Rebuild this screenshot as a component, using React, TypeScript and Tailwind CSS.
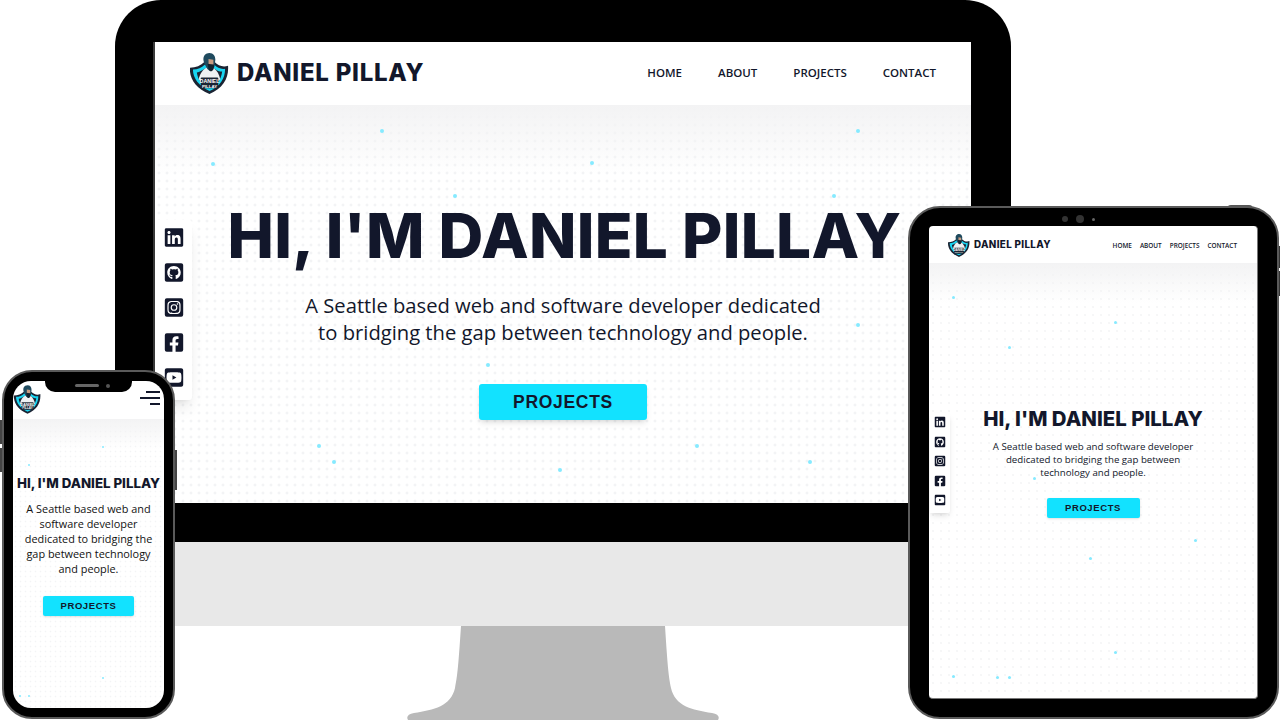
import React from 'react';
import { FaLinkedin, FaGithubSquare, FaInstagramSquare, FaFacebookSquare, FaYoutubeSquare } from 'react-icons/fa';

const socials = [FaLinkedin, FaGithubSquare, FaInstagramSquare, FaFacebookSquare, FaYoutubeSquare];
const navItems = ['HOME', 'ABOUT', 'PROJECTS', 'CONTACT'];

const desktopSpecks = [[226, 25], [702, 25], [57, 58], [436, 57], [299, 90], [678, 90], [702, 219], [332, 259], [163, 340], [541, 340], [178, 356], [654, 356], [404, 364]];
const tabletSpecks = [[24, 34], [186, 59], [80, 84], [266, 277], [161, 295], [186, 389], [105, 215], [24, 413], [68, 414], [80, 414]];
const phoneSpecks = [[90, 28], [16, 46], [90, 259], [7, 277], [16, 277]];

const Specks = ({ points, size }: { points: number[][]; size: number }) => (
  <>
    {points.map(([x, y], i) => (
      <span
        key={i}
        className="absolute rounded-full bg-[#86eaff]"
        style={{ left: x - 1, top: y - 1, width: size, height: size }}
      />
    ))}
  </>
);

const Logo = ({ className }: { className: string }) => (
  <svg viewBox="0 0 40 42" className={className}>
    <path d="M0 15 C6 15 11 13 15 9 L25 9 C29 13 34 15 39 13 C40 26 34 36 20 42 C6 36 -1 26 0 15Z" fill="#1b2433" />
    <path d="M3 17 C8 17 12 15 15 12 L25 12 C28 15 32 17 36 16 C36 26 31 34 20 39 C9 34 3 26 3 17Z" fill="#18d5f2" />
    <path d="M7 20 C10 19 12 18 15 16 L25 16 C28 18 30 19 33 19 C32 27 28 33 20 36 C12 33 8 27 7 20Z" fill="#1b2433" />
    <path d="M9 27 C10 21 13 17 17 15 L24 15 C28 18 30 22 31 27 L25 33 L15 33Z" fill="#eef1f3" />
    <path d="M14 4 C15 1 18 0 20 0 C24 0 26 3 26 7 L25 14 C23 19 19 19 17 15 C15 11 13 8 14 4Z" fill="#1f4a5e" />
    <path d="M19 6 L24 7 L24 12 L19 12Z" fill="#c99b80" />
    <path d="M18 11 L25 12 L24 17 C22 20 20 19 19 16Z" fill="#14222e" />
    <rect x="11" y="25" width="18" height="11" rx="1" fill="#1b2433" />
    <text x="20" y="30.5" textAnchor="middle" className="font-['Liberation_Sans',sans-serif] font-bold text-[5.5px] fill-white">DANIEL</text>
    <text x="20" y="35.5" textAnchor="middle" className="font-['Liberation_Sans',sans-serif] font-bold text-[4.5px] fill-white">PILLAY</text>
  </svg>
);

const Desktop = () => (
  <div className="absolute left-[115px] top-0 w-[896px] h-[626px] flex flex-col">
    <div className="bg-black rounded-t-[46px] h-[542px] pt-[42px] pl-[38px] pr-[40px] pb-[39px]">
      <div className="h-full border-l-2 border-[#3a3a3a] bg-white flex flex-col">
        <header className="h-[63px] flex items-center pl-[35px] pr-[35px] shrink-0">
          <Logo className="w-[39px] h-[41px]" />
          <span className="ml-[8px] mb-[1px] font-['Inter',sans-serif] font-extrabold text-[24px] tracking-[0.75px] text-[#12172b]">DANIEL PILLAY</span>
          <nav className="ml-auto mb-[2px] flex gap-[36px] font-['Open_Sans',sans-serif] font-semibold text-[11.5px] text-[#12172b]">
            {navItems.map((n) => <span key={n}>{n}</span>)}
          </nav>
        </header>
        <main className="relative flex-1 flex flex-col items-center pt-[96px] bg-[radial-gradient(circle,#f1f2f4_0.5px,transparent_2px)] bg-[length:8px_8px]">
          <div className="absolute inset-x-0 top-0 h-[70px] bg-gradient-to-b from-[#f3f3f4] to-transparent" />
          <Specks points={desktopSpecks} size={3.5} />
          <h1 className="relative font-['Inter',sans-serif] font-extrabold text-[62px] leading-[70px] tracking-[0.3px] text-[#12172b] whitespace-nowrap ml-[3px]">HI, I'M DANIEL PILLAY</h1>
          <p className="relative mt-[21px] font-['Open_Sans',sans-serif] text-[20.2px] leading-[27px] text-center text-[#12172b]">
            A Seattle based web and software developer dedicated<br />to bridging the gap between technology and people.
          </p>
          <button className="relative mt-[38px] w-[168px] h-[36px] rounded-[3px] bg-[#12e2ff] shadow-md font-['Liberation_Sans',sans-serif] font-bold text-[17.5px] tracking-[0.7px] text-[#12172b]">PROJECTS</button>
          <aside className="absolute left-0 top-[115px] w-[37px] h-[180px] bg-white rounded-r-[3px] shadow-lg flex flex-col items-center pt-[7px] gap-[14px]">
            {socials.map((Icon, i) => <Icon key={i} className="w-[22px] h-[21px] text-[#12172b] shrink-0" />)}
          </aside>
        </main>
      </div>
    </div>
    <div className="flex-1 bg-[#e8e8e8]" />
  </div>
);

const Stand = () => (
  <svg viewBox="0 0 312 94" className="absolute left-[407px] top-[626px] w-[312px] h-[94px]">
    <path d="M54 0 L258 0 C260 30 261 48 264 62 C268 80 285 84 305 87 C311 88 313 91 311 94 L1 94 C-1 91 1 88 7 87 C27 84 44 80 48 62 C51 48 52 30 54 0Z" fill="#b9b9b9" />
  </svg>
);

const Tablet = () => (
  <div className="absolute left-[908px] top-[206px]">
    <div className="absolute left-[319px] top-[-1px] w-[26px] h-[4px] rounded-t-sm bg-[#555]" />
    <div className="absolute left-[369px] top-[40px] w-[3px] h-[22px] bg-[#333]" />
    <div className="absolute left-[369px] top-[65px] w-[3px] h-[25px] bg-[#333]" />
    <div className="relative w-[371px] h-[513px] rounded-[32px] bg-black border-2 border-[#5a5a5a] pt-[18px] px-[19px] pb-[18px]">
      <div className="absolute left-[152px] top-[7px] flex items-center gap-[8px]">
        <span className="w-[6px] h-[6px] rounded-full bg-[#333]" />
        <span className="w-[8px] h-[8px] rounded-full bg-[#333]" />
        <span className="w-[3px] h-[3px] rounded-full bg-[#666]" />
      </div>
      <div className="h-full rounded-[4px] border-b border-r border-[#777] bg-white overflow-hidden flex flex-col">
        <header className="h-[37px] flex items-center pt-[2px] pl-[19px] pr-[20px] shrink-0">
          <Logo className="w-[22px] h-[23px]" />
          <span className="ml-[4px] font-['Inter',sans-serif] font-extrabold text-[9.8px] tracking-[0.35px] text-[#12172b]">DANIEL PILLAY</span>
          <nav className="ml-auto flex gap-[8px] font-['Open_Sans',sans-serif] font-semibold text-[6.4px] text-[#12172b]">
            {navItems.map((n) => <span key={n}>{n}</span>)}
          </nav>
        </header>
        <main className="relative flex-1 flex flex-col items-center pt-[144px] bg-[radial-gradient(circle,#f3f4f5_0.4px,transparent_1.5px)] bg-[length:8px_8px]">
          <div className="absolute inset-x-0 top-0 h-[40px] bg-gradient-to-b from-[#f3f3f4] to-transparent" />
          <Specks points={tabletSpecks} size={2.5} />
          <h2 className="relative font-['Inter',sans-serif] font-extrabold text-[20.4px] leading-[24px] text-[#12172b] whitespace-nowrap">HI, I'M DANIEL PILLAY</h2>
          <p className="relative mt-[9px] font-['Open_Sans',sans-serif] text-[9.7px] leading-[13px] text-center text-[#12172b]">
            A Seattle based web and software developer<br />dedicated to bridging the gap between<br />technology and people.
          </p>
          <button className="relative mt-[19px] w-[93px] h-[20px] rounded-[2px] bg-[#12e2ff] shadow font-['Liberation_Sans',sans-serif] font-bold text-[9.5px] tracking-[0.6px] text-[#12172b]">PROJECTS</button>
          <aside className="absolute left-[1px] top-[150px] w-[20px] h-[100px] bg-white rounded-r-[2px] shadow-md flex flex-col items-center pt-[3px] gap-[7.5px]">
            {socials.map((Icon, i) => <Icon key={i} className="w-[12px] h-[12px] text-[#12172b] shrink-0" />)}
          </aside>
        </main>
      </div>
    </div>
  </div>
);

const Phone = () => (
  <div className="absolute left-[2px] top-[370px]">
    <div className="absolute left-[-2px] top-[50px] w-[2px] h-[24px] bg-[#444]" />
    <div className="absolute left-[-2px] top-[78px] w-[2px] h-[24px] bg-[#444]" />
    <div className="absolute left-[173px] top-[80px] w-[2px] h-[40px] bg-[#444]" />
    <div className="relative w-[173px] h-[349px] rounded-[30px] bg-black border-2 border-[#5a5a5a] p-[9px]">
      <div className="h-full rounded-[18px] bg-white overflow-hidden flex flex-col">
        <header className="relative h-[38px] flex items-start justify-between pl-[1px] pr-[4px] shrink-0">
          <Logo className="w-[27px] h-[29px] mt-[4px]" />
          <div className="absolute left-[32px] top-0 w-[87px] h-[11px] pl-[30px] pb-[2px] bg-black rounded-b-[10px] flex items-center gap-[7px]">
            <span className="w-[24px] h-[3px] rounded-full bg-[#666]" />
            <span className="w-[4px] h-[4px] rounded-full bg-[#555]" />
          </div>
          <div className="flex flex-col items-end gap-[4px] mt-[10px]">
            <span className="w-[14px] h-[2px] bg-[#12172b]" />
            <span className="w-[20px] h-[2px] bg-[#12172b]" />
            <span className="w-[10px] h-[2px] bg-[#12172b]" />
          </div>
        </header>
        <main className="relative flex-1 flex flex-col items-center pt-[56px] bg-[radial-gradient(circle,#f3f4f5_0.3px,transparent_1.2px)] bg-[length:5px_5px]">
          <div className="absolute inset-x-0 top-0 h-[30px] bg-gradient-to-b from-[#f3f3f4] to-transparent" />
          <Specks points={phoneSpecks} size={2} />
          <h3 className="relative font-['Inter',sans-serif] font-extrabold text-[13.3px] leading-[16px] text-[#12172b] whitespace-nowrap">HI, I'M DANIEL PILLAY</h3>
          <p className="relative mt-[10px] font-['Open_Sans',sans-serif] text-[10.9px] leading-[15px] text-center text-[#111]">
            A Seattle based web and<br />software developer<br />dedicated to bridging the<br />gap between technology<br />and people.
          </p>
          <button className="relative mt-[20px] w-[91px] h-[20px] rounded-[2px] bg-[#12e2ff] shadow font-['Liberation_Sans',sans-serif] font-bold text-[9.5px] tracking-[0.6px] text-[#12172b]">PROJECTS</button>
        </main>
      </div>
    </div>
  </div>
);

export default function App() {
  return (
    <div className="relative w-[1280px] h-[720px] overflow-hidden bg-white">
      <Stand />
      <Desktop />
      <Tablet />
      <Phone />
    </div>
  );
}
